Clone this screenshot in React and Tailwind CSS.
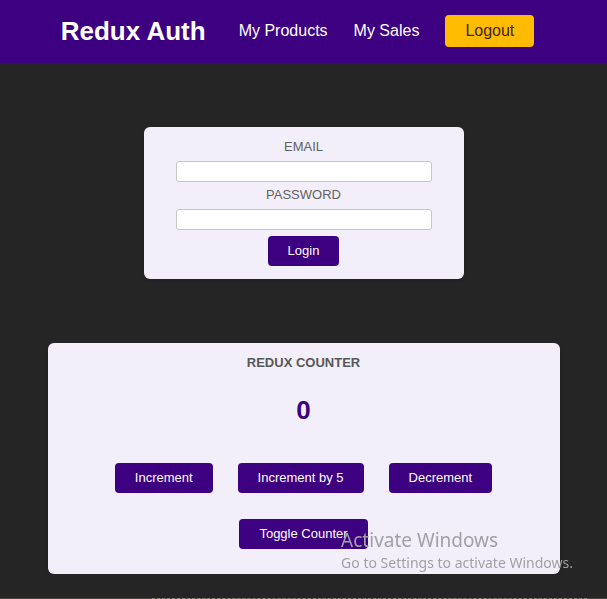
import { useState } from "react";

const buttonStyle =
  "h-[30px] rounded-[4px] bg-[#3c0080] px-5 text-[13px] text-white hover:bg-[#4d00a3]";

function Header() {
  return (
    <header className="flex h-[63px] items-center justify-between bg-[#3c0080] px-[10%] pb-px text-white">
      <h1 className="text-[26px] leading-8 font-bold whitespace-nowrap">Redux Auth</h1>
      <nav className="mr-3">
        <ul className="flex items-center gap-[26px] whitespace-nowrap">
          <li>
            <a href="#products">My Products</a>
          </li>
          <li>
            <a href="#sales">My Sales</a>
          </li>
          <li>
            <button className="h-8 rounded-[4px] bg-[#ffbb00] px-5 text-base text-[#3a2606]">
              Logout
            </button>
          </li>
        </ul>
      </nav>
    </header>
  );
}

function Field({ id, label, type }) {
  return (
    <div className="mb-[3px]">
      <label htmlFor={id} className="mb-1 block leading-5 text-[#616161]">
        {label}
      </label>
      <input
        id={id}
        type={type}
        className="block h-[21px] w-full rounded-[3px] border border-[#c6c6c6] bg-white px-1"
      />
    </div>
  );
}

function LoginForm() {
  return (
    <form
      onSubmit={(event) => event.preventDefault()}
      className="mx-auto mt-16 w-80 rounded-md bg-[#f3effa] px-8 pt-[10px] pb-[13px] text-center text-[13px] shadow"
    >
      <Field id="email" label="EMAIL" type="email" />
      <Field id="password" label="PASSWORD" type="password" />
      <button className={`${buttonStyle} mt-[3px]`}>Login</button>
    </form>
  );
}

function Counter() {
  const [count, setCount] = useState(0);
  const [visible, setVisible] = useState(true);

  return (
    <section className="mx-auto mt-16 w-[calc(100%-95px)] max-w-[640px] rounded-md bg-[#f3effa] pt-[10px] pb-[25px] text-center shadow">
      <h2 className="text-[13px] leading-5 font-bold text-[#575757]">REDUX COUNTER</h2>
      <div className="my-[21px] h-8 text-[26px] leading-8 font-bold text-[#3c0080]">
        {visible && count}
      </div>
      <div className="flex justify-center gap-[25px] pt-4">
        <button className={buttonStyle} onClick={() => setCount(count + 1)}>
          Increment
        </button>
        <button className={buttonStyle} onClick={() => setCount(count + 5)}>
          Increment by 5
        </button>
        <button className={buttonStyle} onClick={() => setCount(count - 1)}>
          Decrement
        </button>
      </div>
      <button className={`${buttonStyle} mt-[26px]`} onClick={() => setVisible(!visible)}>
        Toggle Counter
      </button>
    </section>
  );
}

function ActivationNotice() {
  return (
    <aside className="pointer-events-none fixed right-[34px] bottom-[25px] font-['Noto_Sans',sans-serif] whitespace-nowrap text-[#a2a0a6]">
      <p className="text-[19px] leading-6">Activate Windows</p>
      <p className="text-sm leading-[22px]">Go to Settings to activate Windows.</p>
    </aside>
  );
}

export default function App() {
  return (
    <div className="min-h-screen bg-[#252525] font-['Liberation_Sans',Arial,sans-serif]">
      <Header />
      <main className="overflow-hidden">
        <LoginForm />
        <Counter />
      </main>
      <ActivationNotice />
      <div className="fixed inset-x-0 bottom-0 flex h-px bg-[#4a4542] pr-5 pl-[25%]">
        <div className="grow border-t border-dashed border-[#857f7a]" />
      </div>
    </div>
  );
}
